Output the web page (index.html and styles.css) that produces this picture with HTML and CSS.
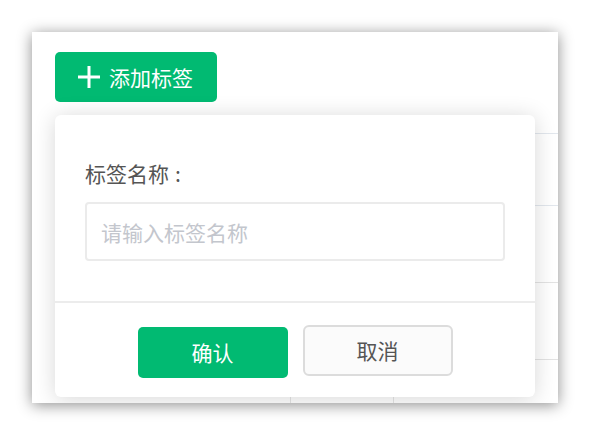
FILE: index.html
```
<!DOCTYPE html>
<html lang="zh-CN">
<head>
<meta charset="utf-8">
<title>添加标签</title>
<link rel="stylesheet" href="styles.css">
</head>
<body>
<div class="panel">
  <button class="add-btn" type="button">
    <svg class="plus" width="22" height="22" viewBox="0 0 22 22" aria-hidden="true">
      <path d="M11 0V22M0 11H22" stroke="#fff" stroke-width="3" fill="none"/>
    </svg>
    <span>添加标签</span>
  </button>
  <div class="table">
    <div class="row head"><div class="cell c1"></div><div class="cell c2"></div><div class="cell c3"></div></div>
    <div class="row r1"><div class="cell c1"></div><div class="cell c2"></div><div class="cell c3"></div></div>
    <div class="row r2"><div class="cell c1"></div><div class="cell c2"></div><div class="cell c3"></div></div>
    <div class="row r3"><div class="cell c1"></div><div class="cell c2"></div><div class="cell c3"></div></div>
    <div class="row r4"><div class="cell c1"></div><div class="cell c2"></div><div class="cell c3"></div></div>
  </div>
  <div class="popover">
    <div class="pop-body">
      <div class="label">标签名称<span class="colon">:</span></div>
      <input class="field" type="text" placeholder="请输入标签名称">
    </div>
    <div class="pop-footer">
      <button class="btn btn-primary" type="button">确认</button>
      <button class="btn btn-default" type="button">取消</button>
    </div>
  </div>
</div>
</body>
</html>
```
FILE: styles.css
```
* { box-sizing: border-box; }
html, body { margin: 0; background: #fff; }
body {
  padding: 32px;
  font-family: "Noto Sans CJK SC", "Noto Sans", sans-serif;
}
.panel {
  position: relative;
  width: 526px;
  height: 371px;
  background: #fff;
  padding: 20px 0 0 23px;
  overflow: hidden;
  box-shadow: 0 2px 14px rgba(0, 0, 0, 0.45);
}
.add-btn {
  display: flex;
  align-items: center;
  justify-content: center;
  gap: 9px;
  width: 162px;
  height: 50px;
  padding: 0 1px 0 0;
  border: none;
  border-radius: 5px;
  background: #01ba72;
  color: #fff;
  font-family: inherit;
  font-size: 21px;
  line-height: 1;
}
.plus { display: block; flex: none; }
.table {
  margin-top: 13px;
  width: 560px;
}
.row {
  display: flex;
  border-bottom: 1px solid #e2e7ed;
}
.row.r2, .row.r3, .row.r4 { border-bottom-color: #e3e3e3; }
.cell { border-right: 1px solid #e6e6e6; }
.c1 { width: 236px; }
.c2 { width: 103px; }
.c3 { flex: 1; border-right: none; }
.head { height: 19px; }
.r1 { height: 72px; }
.r2 { height: 77px; }
.r3 { height: 77px; }
.r4 { height: 77px; }
.popover {
  position: absolute;
  left: 23px;
  top: 83px;
  width: 480px;
  height: 282px;
  background: #fff;
  border-radius: 6px;
  box-shadow: 0 2px 22px rgba(0, 0, 0, 0.16);
}
.pop-body {
  padding: 44px 30px 40px 30px;
  border-bottom: 2px solid #ececec;
}
.label {
  font-size: 21px;
  line-height: 28px;
  color: #555;
}
.colon {
  display: inline-block;
  width: 1em;
  text-align: center;
  padding-right: 3px;
}
.field {
  display: block;
  width: 100%;
  height: 59px;
  margin-top: 15px;
  padding: 0 14px;
  border: 2px solid #ebebeb;
  border-radius: 4px;
  font-family: inherit;
  font-size: 21px;
  color: #555;
  outline: none;
  background: #fff;
}
.field::placeholder { color: #c3c6cd; }
.pop-footer {
  display: flex;
  justify-content: center;
  align-items: flex-start;
  gap: 15px;
  padding-top: 22px;
}
.btn {
  width: 150px;
  height: 51px;
  border-radius: 5px;
  font-family: inherit;
  font-size: 21px;
  line-height: 1;
  padding: 0;
}
.btn-primary {
  margin-top: 2px;
  border: none;
  background: #01ba72;
  color: #fff;
}
.btn-default {
  border: 2px solid #dcdcdc;
  background: #fbfbfb;
  color: #555;
  border-radius: 6px;
}
```
